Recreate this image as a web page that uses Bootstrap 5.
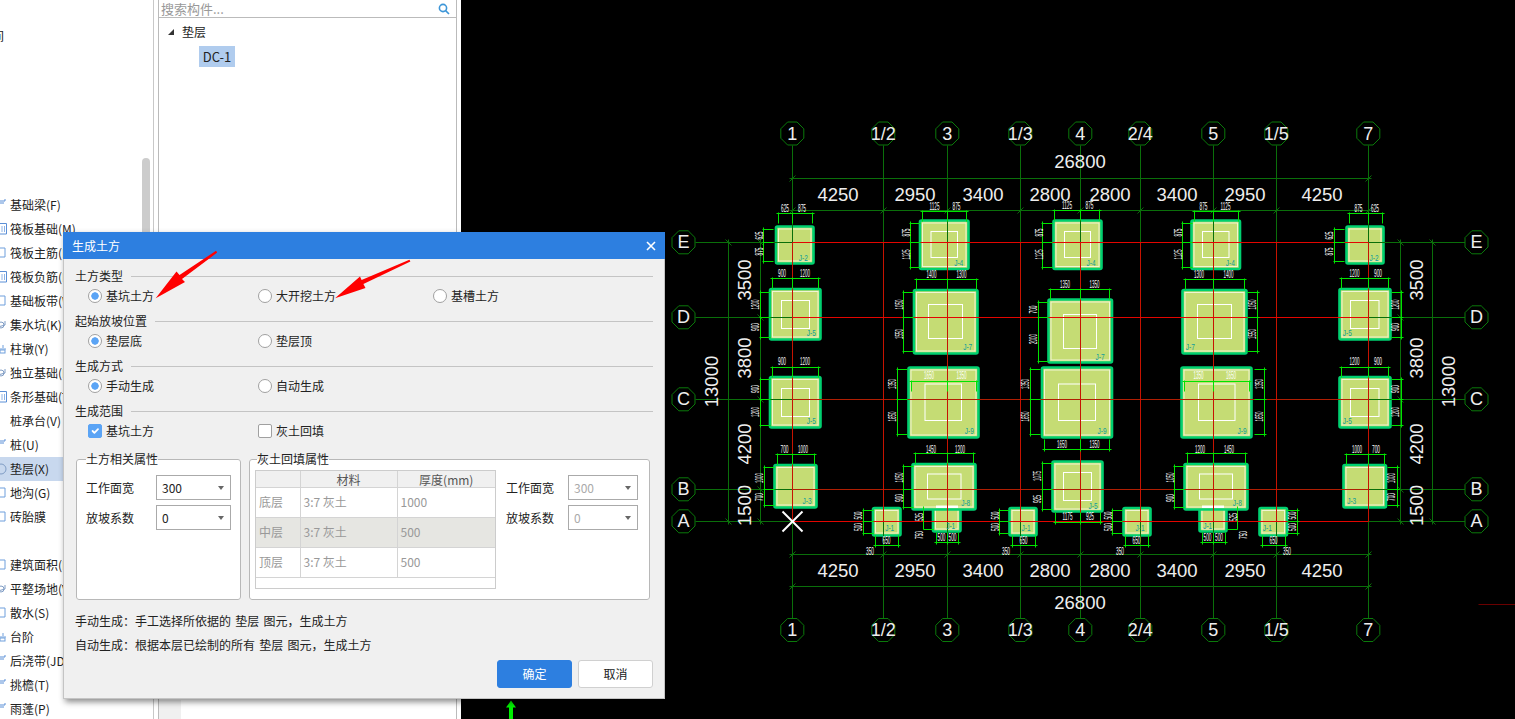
<!DOCTYPE html>
<html lang="zh-CN">
<head>
  <meta charset="UTF-8">
  <title>生成土方</title>
  <link href="https://cdn.jsdelivr.net/npm/bootstrap@5.3.0/dist/css/bootstrap.min.css" rel="stylesheet">
  <style>
    html, body { margin: 0; height: 719px; overflow: hidden; }
    body { font-family: "Noto Sans CJK SC", "Noto Sans", sans-serif; font-size: 12px; color: #222; background: #fff; }
    .app-shell { width: 1515px; height: 719px; overflow: hidden; }

    /* left module list */
    .mod-list { width: 154px; border-right: 1px solid #c8c8c8; flex: none; overflow: hidden; }
    .mod-row { height: 24px; padding-left: 10px; line-height: 24px; white-space: nowrap; position: relative; }
    .mod-row svg { position: absolute; left: 0; top: 5px; }
    .mod-row.is-active { background: #c8d8ee; }
    .mod-gap { height: 145px; }
    .mod-gap-sm { height: 24px; }
    .mod-cut { margin-left: -18px; }
    .mod-scroll { position: absolute; left: 142px; top: 158px; width: 8px; height: 440px; border-radius: 4px; background: #ccc; }

    /* component tree */
    .tree-panel { width: 299px; margin-left: 4px; border-left: 1px solid #bbb; border-right: 1px solid #bbb; flex: none; }
    .tree-search { height: 18px; border-bottom: 1px solid #bbb; padding: 0 6px 0 2px; color: #999; font-size: 13px; line-height: 16px; }
    .tree-top { height: 28px; padding-left: 9px; gap: 8px; }
    .tree-arrow { width: 0; height: 0; border-left: 6px solid transparent; border-bottom: 6px solid #333; }
    .tree-leaf { margin: 0 0 0 40px; width: 36px; height: 21px; line-height: 21px; font-size: 13px; text-align: center; background: #b0ccee; }
    .tree-hbar { width: 22px; height: 19px; margin-top: auto; background: #f0f0f0; }
    .cad-gutter { width: 4px; flex: none; }
    .cad-view { width: 1054px; height: 719px; background: #000; flex: none; display: block; }

    /* dialog */
    .tf-dialog { position: absolute; left: 63px; top: 232px; width: 602px; height: 467px; background: #f0f0f0; border: 1px solid #c4c4c4; border-top: 0; box-shadow: 2px 3px 6px rgba(0, 0, 0, .45); }
    .tf-title { height: 27px; margin: 0 -1px; padding: 0 8px 0 9px; background: #2d7fe0; color: #fff; }
    .tf-close { width: 12px; height: 12px; stroke: #fff; stroke-width: 1.6; }
    .tf-body { padding: 7px 11px 0 11px; }
    .tf-section { margin-bottom: 5px; }
    .tf-legend { height: 20px; gap: 8px; }
    .tf-legend hr { flex: 1; margin: 0; border: 0; border-top: 1px solid #c4c4c4; opacity: 1; }
    .tf-opts { height: 20px; padding-left: 13px; }
    .tf-col-a { width: 170px; }
    .tf-col-b { width: 175px; }
    .tf-dialog .form-check { min-height: 0; margin: 0; padding: 0; display: flex; align-items: center; gap: 4px; }
    .tf-dialog .form-check-input { float: none; margin: 0; width: 14px; height: 14px; flex: none; border-color: #a0a0a0; }
    .tf-dialog .form-check-input[type=radio]:checked { background-color: #fff; background-image: radial-gradient(circle, #5ba4f5 0, #5ba4f5 3.4px, transparent 4px); border-color: #a0a0a0; }
    .tf-dialog .form-check-input[type=checkbox] { border-radius: 2px; }
    .tf-dialog .form-check-input[type=checkbox]:checked { background-color: #5ba4f5; border-color: #5ba4f5; }
    .tf-dialog .form-check-label { line-height: 20px; }
    .tf-boxes { gap: 8px; margin: 9px 0 0 1px; }
    .tf-box { height: 150px; background: #fff; border: 1px solid #b8b8b8; border-radius: 3px; margin: 0; flex: none; }
    .tf-box legend { float: none; width: auto; height: 18px; margin: 0; padding: 0; font-size: 12px; line-height: 18px; font-weight: 400; }
    .tf-box-a { width: 165px; padding: 7px 0 0 9px; }
    .tf-box-b { width: 401px; padding: 2px 0 0 5px; }
    .tf-box-b legend { margin-left: 2px; }
    .tf-field { height: 25px; margin-bottom: 5px; }
    .tf-field label { width: 70px; flex: none; }
    .tf-select { width: 75px; height: 25px; padding: 0 0 0 5px; border: 1px solid #aaa; border-radius: 0; font-size: 12px; line-height: 23px; color: #222; min-height: 0; background-color: #fff; background-size: 6px 4px; background-position: right 6px center; background-image: url("data:image/svg+xml,%3csvg xmlns='http://www.w3.org/2000/svg' viewBox='0 0 6 4'%3e%3cpath fill='%23666' d='M0 0h6L3 4z'/%3e%3c/svg%3e"); }
    .tf-select:disabled { background-color: #fff; color: #aaa; }
    .tf-side { margin: 5px 0 0 10px; }
    .tf-side label { width: 62px; }
    .tf-side .tf-select { width: 70px; }
    .tf-tablewrap { width: 241px; height: 119px; border: 1px solid #ccc; background: #fff; flex: none; overflow: hidden; }
    .tf-table { width: 240px; margin: 0; table-layout: fixed; font-size: 12px; --bs-table-bg: transparent; }
    .tf-table th, .tf-table td { padding: 0 3px; height: 30px; line-height: 28px; border: 0; border-right: 1px solid #d4d4d4; border-bottom: 1px solid #d4d4d4; color: #999; font-weight: 400; box-shadow: none; }
    .tf-table th { height: 16px; line-height: 14px; text-align: center; background: #f0f0f0; color: #555; }
    .tf-table th:nth-child(1) { width: 44px; }
    .tf-table th:nth-child(2) { width: 97px; }
    .tf-table tr.is-alt td { background: #e6e6e2; }
    .tf-note { line-height: 24px; white-space: nowrap; word-spacing: 1.5px; }
    .tf-notes { margin-top: 9px; }
    .tf-actions { gap: 6px; margin-top: 3px; }
    .tf-btn { width: 75px; height: 28px; padding: 0; font-size: 12px; border-radius: 3px; border: 1px solid #d0d0d0; background: #fff; color: #222; }
    .tf-btn.tf-ok { background: #2d7fe0; border-color: #2d7fe0; color: #fff; }

    .tf-arrows { position: absolute; left: 0; top: 0; width: 1515px; height: 719px; pointer-events: none; }
    .cad-view text { font-family: "Liberation Sans", sans-serif; fill: #eee; text-anchor: middle; dominant-baseline: central; }
  </style>
</head>
<body>

<div class="app-shell d-flex position-relative">
  <div class="mod-list position-relative" id="modList"></div>

  <div class="tree-panel d-flex flex-column">
    <div class="tree-search d-flex justify-content-between align-items-center">
      <span>搜索构件...</span>
      <svg width="12" height="12" viewBox="0 0 12 12" fill="none" stroke="#3d96d8" stroke-width="1.6"><circle cx="5" cy="5" r="3.6"/><path d="M7.6 7.6 11 11"/></svg>
    </div>
    <div class="tree-top d-flex align-items-center"><span class="tree-arrow"></span><span>垫层</span></div>
    <div class="tree-leaf">DC-1</div>
    <div class="tree-hbar"></div>
  </div>
  <div class="cad-gutter"></div>

  <svg class="cad-view" id="cad" viewBox="461 0 1054 719" xmlns="http://www.w3.org/2000/svg"></svg>

  <div class="tf-dialog d-flex flex-column">
    <div class="tf-title d-flex justify-content-between align-items-center">
      <span>生成土方</span>
      <svg class="tf-close" viewBox="0 0 12 12"><path d="M2 2l8 8M10 2l-8 8"/></svg>
    </div>
    <div class="tf-body">
      <div class="tf-section">
        <div class="tf-legend d-flex align-items-center"><span>土方类型</span><hr></div>
        <div class="tf-opts d-flex align-items-center">
          <div class="form-check tf-col-a"><input class="form-check-input" type="radio" name="t1" id="t1a" checked><label class="form-check-label" for="t1a">基坑土方</label></div>
          <div class="form-check tf-col-b"><input class="form-check-input" type="radio" name="t1" id="t1b"><label class="form-check-label" for="t1b">大开挖土方</label></div>
          <div class="form-check"><input class="form-check-input" type="radio" name="t1" id="t1c"><label class="form-check-label" for="t1c">基槽土方</label></div>
        </div>
      </div>
      <div class="tf-section">
        <div class="tf-legend d-flex align-items-center"><span>起始放坡位置</span><hr></div>
        <div class="tf-opts d-flex align-items-center">
          <div class="form-check tf-col-a"><input class="form-check-input" type="radio" name="t2" id="t2a" checked><label class="form-check-label" for="t2a">垫层底</label></div>
          <div class="form-check tf-col-b"><input class="form-check-input" type="radio" name="t2" id="t2b"><label class="form-check-label" for="t2b">垫层顶</label></div>
        </div>
      </div>
      <div class="tf-section">
        <div class="tf-legend d-flex align-items-center"><span>生成方式</span><hr></div>
        <div class="tf-opts d-flex align-items-center">
          <div class="form-check tf-col-a"><input class="form-check-input" type="radio" name="t3" id="t3a" checked><label class="form-check-label" for="t3a">手动生成</label></div>
          <div class="form-check tf-col-b"><input class="form-check-input" type="radio" name="t3" id="t3b"><label class="form-check-label" for="t3b">自动生成</label></div>
        </div>
      </div>
      <div class="tf-section">
        <div class="tf-legend d-flex align-items-center"><span>生成范围</span><hr></div>
        <div class="tf-opts d-flex align-items-center">
          <div class="form-check tf-col-a"><input class="form-check-input" type="checkbox" id="t4a" checked><label class="form-check-label" for="t4a">基坑土方</label></div>
          <div class="form-check tf-col-b"><input class="form-check-input" type="checkbox" id="t4b"><label class="form-check-label" for="t4b">灰土回填</label></div>
        </div>
      </div>

      <div class="tf-boxes d-flex">
        <fieldset class="tf-box tf-box-a">
          <legend>土方相关属性</legend>
          <div class="tf-field d-flex align-items-center"><label>工作面宽</label><select class="form-select tf-select"><option>300</option></select></div>
          <div class="tf-field d-flex align-items-center"><label>放坡系数</label><select class="form-select tf-select"><option>0</option></select></div>
        </fieldset>
        <fieldset class="tf-box tf-box-b">
          <legend>灰土回填属性</legend>
          <div class="d-flex">
            <div class="tf-tablewrap">
              <table class="table tf-table">
                <thead><tr><th></th><th>材料</th><th>厚度(mm)</th></tr></thead>
                <tbody>
                  <tr><td>底层</td><td>3:7 灰土</td><td>1000</td></tr>
                  <tr class="is-alt"><td>中层</td><td>3:7 灰土</td><td>500</td></tr>
                  <tr><td>顶层</td><td>3:7 灰土</td><td>500</td></tr>
                </tbody>
              </table>
            </div>
            <div class="tf-side">
              <div class="tf-field d-flex align-items-center"><label>工作面宽</label><select class="form-select tf-select" disabled><option>300</option></select></div>
              <div class="tf-field d-flex align-items-center"><label>放坡系数</label><select class="form-select tf-select" disabled><option>0</option></select></div>
            </div>
          </div>
        </fieldset>
      </div>

      <div class="tf-notes">
        <div class="tf-note">手动生成：手工选择所依据的 垫层 图元，生成土方</div>
        <div class="tf-note">自动生成：根据本层已绘制的所有 垫层 图元，生成土方</div>
      </div>
      <div class="tf-actions d-flex justify-content-end">
        <button type="button" class="btn tf-btn tf-ok">确定</button>
        <button type="button" class="btn tf-btn">取消</button>
      </div>
    </div>
  </div>

  <!-- red hand-drawn arrows over the dialog -->
  <svg class="tf-arrows" viewBox="0 0 1515 719" xmlns="http://www.w3.org/2000/svg">
    <path fill="#f00" d="M155.7 298.3 176.5 271.5 179.5 275 216 250.8 217.2 252.6 182 279 185 282z"/>
    <path fill="#f00" d="M335 298.3 360 276.5 361.6 280 409.4 259.8 410.4 261.6 363.4 284 365.5 288z"/>
  </svg>
</div>

<script src="https://cdn.jsdelivr.net/npm/bootstrap@5.3.0/dist/js/bootstrap.bundle.min.js"></script>
<script>
  // left list
  const icons = {
    box: '<path d="M-4 1.5H6.5V12H-4" fill="none" stroke="#5b8fd6"/><path d="M2 4v6M4.5 4v6" stroke="#8fb4e6"/>',
    thin: '<path d="M-4 2H5V11H-4" fill="none" stroke="#6f9fdc"/>',
    dash: '<path d="M0 7H6M3 3V6" stroke="#6f9fdc" fill="none"/><rect x="0" y="8" width="5" height="3" fill="none" stroke="#6f9fdc"/>',
    dish: '<path d="M-2 9 5 7V3" stroke="#7f9cc4" fill="none"/><circle cx="1" cy="7" r="3" fill="none" stroke="#7f9cc4"/>',
    flag: '<path d="M0 3H5V1M-1 5H4" fill="none" stroke="#5b8fd6"/>',
    ring: '<circle cx="1" cy="7" r="5" fill="none" stroke="#7f9cc4"/>',
    none: ''
  };
  const rows = [
    ['基础梁(F)', 'flag'], ['筏板基础(M)', 'box'], ['筏板主筋(R)', 'thin'], ['筏板负筋(F)', 'box'],
    ['基础板带(W)', 'thin'], ['集水坑(K)', 'dish'], ['柱墩(Y)', 'dash'], ['独立基础(D)', 'dish'],
    ['条形基础(T)', 'box'], ['桩承台(V)', 'none'], ['桩(U)', 'flag'], ['垫层(X)', 'ring'],
    ['地沟(G)', 'thin'], ['砖胎膜', 'thin'], null, ['建筑面积(M)', 'thin'], ['平整场地(V)', 'dish'],
    ['散水(S)', 'thin'], ['台阶', 'dash'], ['后浇带(JD)', 'flag'], ['挑檐(T)', 'flag'], ['雨蓬(P)', 'flag']
  ];
  let listHtml = '<div class="mod-gap-sm"></div><div class="mod-row"><span class="mod-cut">间</span></div><div class="mod-gap"></div>';
  rows.forEach(r => {
    if (!r) { listHtml += '<div class="mod-gap-sm"></div>'; return; }
    const active = r[0].startsWith('垫层') ? ' is-active' : '';
    listHtml += `<div class="mod-row${active}"><svg width="8" height="14" viewBox="0 0 8 14">${icons[r[1]]}</svg>${r[0]}</div>`;
  });
  listHtml += '<div class="mod-scroll"></div>';
  document.getElementById('modList').innerHTML = listHtml;

  // drawing
  let out = '';
  const DARK = '#0a6f0a', LIME = '#00e400', RED = '#f00000';
  const px = v => Math.round(v) + .5;
  const line = (a, b, c, d, col, w = 1, op = 1) =>
    out += `<line x1="${px(a)}" y1="${px(b)}" x2="${px(c)}" y2="${px(d)}" stroke="${col}" stroke-width="${w}" opacity="${op}"/>`;
  const txt = (x, y, s, size, rot) =>
    out += `<text x="${x}" y="${y}" font-size="${size}"${rot ? ` transform="rotate(-90 ${x} ${y})"` : ''}>${s}</text>`;
  const mini = (x, y, s, rot) =>
    out += `<text x="${x}" y="${y}" font-size="10.5" textLength="${s.length > 3 ? 10 : 8}" lengthAdjust="spacingAndGlyphs"${rot ? ` transform="rotate(-90 ${x} ${y})"` : ''} style="fill:#fff">${s}</text>`;
  const tick = (x, y) => line(x - 3, y + 3, x + 3, y - 3, DARK);

  const vx = { '1': 792, '1/2': 883, '3': 947, '1/3': 1020, '4': 1080, '2/4': 1140, '5': 1213, '1/5': 1276, '7': 1368 };
  const hy = { E: 242, D: 317, C: 399, B: 489, A: 521 };

  // foundations: x0 y0 x1 y1, label + its place, inner square
  const pads = [
    [933, 505, 960.5, 531.5, 'J-1', 950.7, 525.7],
    [1199.5, 505, 1226.5, 531.5, 'J-1', 1207.7, 525.7],
    [776, 226.5, 813.5, 263.5, 'J-2', 803.3, 257.7],
    [920, 220.5, 968.5, 269, 'J-4', 958.7, 262.7, [931, 231.5, 957.5, 257.5]],
    [1053.5, 220.5, 1101.5, 269, 'J-4', 1091, 262.7, [1064.5, 231.5, 1090.5, 257.5]],
    [1191.5, 220.5, 1240, 269, 'J-4', 1230.3, 262.7, [1202.5, 231.5, 1229, 257.5]],
    [1346.5, 226.5, 1383.5, 263.5, 'J-2', 1374, 257.7],
    [770, 289, 820.5, 339.5, 'J-5', 811.3, 333, [781.5, 300.5, 809.5, 328.5]],
    [914, 290, 977.5, 353.5, 'J-7', 967.7, 347, [928.5, 304.5, 962.5, 338.5]],
    [1048.5, 299.5, 1112, 362.5, 'J-7', 1100, 357, [1063.5, 314.5, 1096.5, 348.5]],
    [1182.5, 290, 1246.5, 353.5, 'J-7', 1190.3, 347, [1197.5, 304.5, 1231.5, 338.5]],
    [1339.5, 289, 1390.5, 339.5, 'J-5', 1347.3, 333, [1350.5, 300.5, 1379, 328.5]],
    [770, 377, 820.5, 427.5, 'J-5', 811.3, 421, [781.5, 388.5, 809.5, 416.5]],
    [908.5, 367.5, 978.5, 437.5, 'J-9', 969.3, 431, [925, 384, 961.5, 420.5]],
    [1042, 367.5, 1112, 437.5, 'J-9', 1102, 431, [1058.5, 384, 1095.5, 420.5]],
    [1181.5, 367.5, 1251.5, 437.5, 'J-9', 1242, 431, [1198.5, 384, 1235, 420.5]],
    [1339.5, 377, 1390.5, 427.5, 'J-5', 1347.3, 421, [1350.5, 388.5, 1379, 416.5]],
    [774.5, 465, 816.5, 507.5, 'J-3', 807, 500.7],
    [912.5, 464, 975.5, 509.5, 'J-8', 965.7, 502.7, [927.5, 474, 961, 499]],
    [1052.5, 461.5, 1102.5, 511.5, 'J-5', 1093, 505.7, [1063.5, 472.5, 1091.5, 500.5]],
    [1184.5, 464, 1247.5, 509.5, 'J-8', 1237.3, 502.7, [1199.5, 474, 1232.5, 499]],
    [1343.5, 465, 1386, 507.5, 'J-3', 1351.7, 500.7],
    [873, 508, 900.5, 535.5, 'J-1', 889.7, 528.3],
    [1009.5, 508, 1036.5, 535.5, 'J-1', 1026, 528.3],
    [1123.5, 508, 1150.5, 535.5, 'J-1', 1140, 528.3],
    [1259.5, 508, 1287, 535.5, 'J-1', 1267.3, 528.3]
  ];
  pads.forEach(p => {
    const [a, b, c, d] = p;
    out += `<rect x="${a}" y="${b}" width="${c - a}" height="${d - b}" rx="1.5" fill="#c5dc74" stroke="#00d070" stroke-width="2.6"/>`;
    out += `<rect x="${a + 2.5}" y="${b + 2.5}" width="${c - a - 5}" height="${d - b - 5}" fill="none" stroke="#f0f5d4" stroke-width="1"/>`;
    if (p[7]) {
      const s = p[7];
      out += `<rect x="${s[0]}" y="${s[1]}" width="${s[2] - s[0]}" height="${s[3] - s[1]}" fill="none" stroke="#fff" stroke-width="1"/>`;
    }
  });
  // stems of the T shaped pads show no border on top of the J-8 slab
  out += '<rect x="936" y="505.5" width="22" height="2.5" fill="#fff"/><rect x="1202" y="505.5" width="22" height="2.5" fill="#fff"/>';

  // axis lines
  Object.values(vx).forEach(x => line(x, 145, x, 618, DARK));
  Object.values(hy).forEach(y => line(695, y, 1465, y, DARK));
  // reinforcement grid in red, C is a touch darker
  Object.values(vx).forEach(x => line(x, 242, x, 521, RED, 1, .82));
  Object.entries(hy).forEach(([k, y]) => line(792, y, 1368, y, RED, 1, k === 'C' || k === 'B' ? .72 : .95));

  // overall dimension lines
  [178, 586].forEach(y => { line(789, y, 1371, y, DARK); tick(792, y); tick(1368, y); });
  [210, 554].forEach(y => { line(789, y, 1371, y, DARK); Object.values(vx).forEach(x => tick(x, y)); });
  [728, 760, 1400, 1432].forEach(x => {
    const thick = x === 760 || x === 1400;
    line(x, 239, x, 524, DARK);
    (thick ? [242, 317, 399, 489, 521] : [242, 521]).forEach(y => line(x - 3, y - 3, x + 3, y + 3, DARK));
  });

  txt(1080, 161, '26800', 18.5);
  txt(1080, 602, '26800', 18.5);
  [[838, '4250'], [915, '2950'], [983, '3400'], [1050, '2800'], [1110, '2800'], [1177, '3400'], [1245, '2950'], [1322, '4250']]
    .forEach(d => { txt(d[0], 194, d[1], 18.5); txt(d[0], 570, d[1], 18.5); });
  [[744, 1416]].forEach(xs => xs.forEach(x => {
    [[280, '3500'], [358, '3800'], [444, '4200'], [505.5, '1500']].forEach(d => txt(x, d[0], d[1], 18.5, true));
  }));
  txt(711.5, 381.5, '13000', 18.5, true);
  txt(1448, 381.5, '13000', 18.5, true);

  // bubbles
  const bubble = (x, y, s) => {
    const r = 12.4, pts = [];
    for (let i = 0; i < 8; i++) {
      const t = Math.PI / 8 + i * Math.PI / 4;
      pts.push((x + r * Math.cos(t)).toFixed(1) + ',' + (y + r * Math.sin(t)).toFixed(1));
    }
    out += `<polygon points="${pts.join(' ')}" fill="#000" stroke="#0a7a0a" stroke-width="1"/>`;
    txt(x, y, s, 18);
  };
  Object.entries(vx).forEach(([k, x]) => { bubble(x + .3, 133.5, k); bubble(x + .3, 630, k); });
  Object.entries(hy).forEach(([k, y]) => { bubble(683.5, y + .3, k); bubble(1476.5, y + .3, k); });

  // footing dimensions, ext lines run towards the pad
  const hDim = (y, xs, labels, ty, dir) => {
    line(xs[0] - 2, y, xs[xs.length - 1] + 2, y, LIME);
    xs.forEach(x => line(x, y - 1.5 * dir, x, y + 10 * dir, LIME));
    labels.forEach((l, i) => mini((xs[i] + xs[i + 1]) / 2, ty, l));
  };
  const vDim = (x, ys, labels, tx, dir) => {
    line(x, ys[0] - 2, x, ys[ys.length - 1] + 2, LIME);
    ys.forEach(y => line(x - 1.5 * dir, y, x + 10 * dir, y, LIME));
    labels.forEach((l, i) => mini(tx, (ys[i] + ys[i + 1]) / 2, l, true));
  };

  [
    [213, [778, 792, 812], ['625', '875'], 208], [211, [922, 947, 966], ['1125', '875'], 206],
    [210, [1054, 1080, 1099], ['1125', '875'], 205], [211, [1194, 1213, 1238], ['875', '1125'], 206],
    [213, [1349, 1368, 1382], ['875', '625'], 208], [278, [772, 792, 818], ['900', '1200'], 273],
    [279, [916, 947, 976], ['1400', '1300'], 274], [289, [1050, 1080, 1109], ['1350', '1350'], 284],
    [279, [1185, 1213, 1244], ['1300', '1400'], 274], [278, [1341, 1368, 1388], ['1200', '900'], 273],
    [367, [772, 792, 818], ['900', '1200'], 361], [381, [911, 947, 976], ['1650', '1350'], 375],
    [381, [1184, 1213, 1249], ['1350', '1650'], 375], [367, [1341, 1368, 1388], ['1200', '900'], 361],
    [454, [777, 792, 814], ['700', '1000'], 449], [453, [915, 947, 973], ['1450', '1200'], 449],
    [453, [1187, 1213, 1245], ['1200', '1450'], 449], [454, [1346, 1368, 1384], ['1000', '700'], 449]
  ].forEach(d => hDim(d[0], d[1], d[2], d[3], 1));
  [
    [449, [1044, 1080, 1109], ['1650', '1350'], 444], [522, [1055, 1080, 1100], ['1175', '925'], 516],
    [545, [875, 898], ['650'], 540], [545, [1012, 1035], ['650'], 540], [545, [1125, 1148], ['650'], 540],
    [545, [1262, 1285], ['650'], 540], [542, [936, 947, 958], ['500', '500'], 537], [542, [1202, 1213, 1225], ['500', '500'], 537]
  ].forEach(d => hDim(d[0], d[1], d[2], d[3], -1));
  [[870, 551], [1006, 551], [1120, 551], [1287, 551]].forEach(p => mini(p[0], p[1], '350'));

  [
    [763, [229, 242, 261], ['625', '875'], 759], [910, [223, 242, 267], ['875', '1125'], 906],
    [1042, [223, 242, 267], ['875', '1125'], 1039], [1182, [223, 242, 267], ['875', '1125'], 1178],
    [1334, [229, 242, 261], ['625', '875'], 1329], [760, [292, 317, 337], ['1200', '900'], 755],
    [903, [292, 317, 351], ['1050', '1550'], 899], [1038, [302, 317, 361], ['700', '2000'], 1033],
    [760, [379, 399, 425], ['900', '1200'], 755], [897, [369, 399, 434], ['1350', '1650'], 892],
    [1030, [369, 399, 434], ['1350', '1650'], 1025], [764, [467, 489, 505], ['1000', '700'], 759],
    [903, [466, 489, 507], ['1050', '900'], 899], [1042, [463, 489, 509], ['1075', '925'], 1037],
    [1174, [466, 489, 507], ['1050', '900'], 1170], [863, [510, 521, 533], ['500', '500'], 858],
    [999, [510, 521, 533], ['500', '500'], 995], [1112, [510, 521, 533], ['500', '500'], 1108]
  ].forEach(d => vDim(d[0], d[1], d[2], d[3], 1));
  [
    [1257, [292, 317, 351], ['1050', '1550'], 1252], [1401, [292, 317, 337], ['1200', '900'], 1395],
    [1264, [369, 399, 434], ['1350', '1650'], 1259], [1401, [379, 399, 425], ['900', '1200'], 1395],
    [1397, [467, 489, 505], ['1000', '700'], 1391], [1297, [510, 521, 533], ['500', '500'], 1292]
  ].forEach(d => vDim(d[0], d[1], d[2], d[3], -1));
  // stem offsets of the T footings
  line(923, 506, 923, 529, LIME); line(923, 529, 933, 529, LIME);
  mini(919, 517, '525', true); mini(919, 535, '750', true);
  line(1237, 506, 1237, 529, LIME); line(1227, 529, 1237, 529, LIME);
  mini(1233, 517, '525', true); mini(1243, 535, '750', true);

  // pad labels
  pads.forEach(p => out += `<text x="${p[5]}" y="${p[6]}" font-size="8.5" textLength="9" lengthAdjust="spacingAndGlyphs" style="fill:#0f9c9c">${p[4]}</text>`);

  // origin cross, stray line and the green axis arrow
  line(782, 511, 802, 531, '#fff', 2); line(802, 511, 782, 531, '#fff', 2);
  line(1478, 604, 1515, 604, '#6a0000');
  out += '<path fill="#00f000" d="M511 700.5 516 707.5H513V719H509V707.5H506z"/>';

  document.getElementById('cad').innerHTML = out;
</script>
</body>
</html>
